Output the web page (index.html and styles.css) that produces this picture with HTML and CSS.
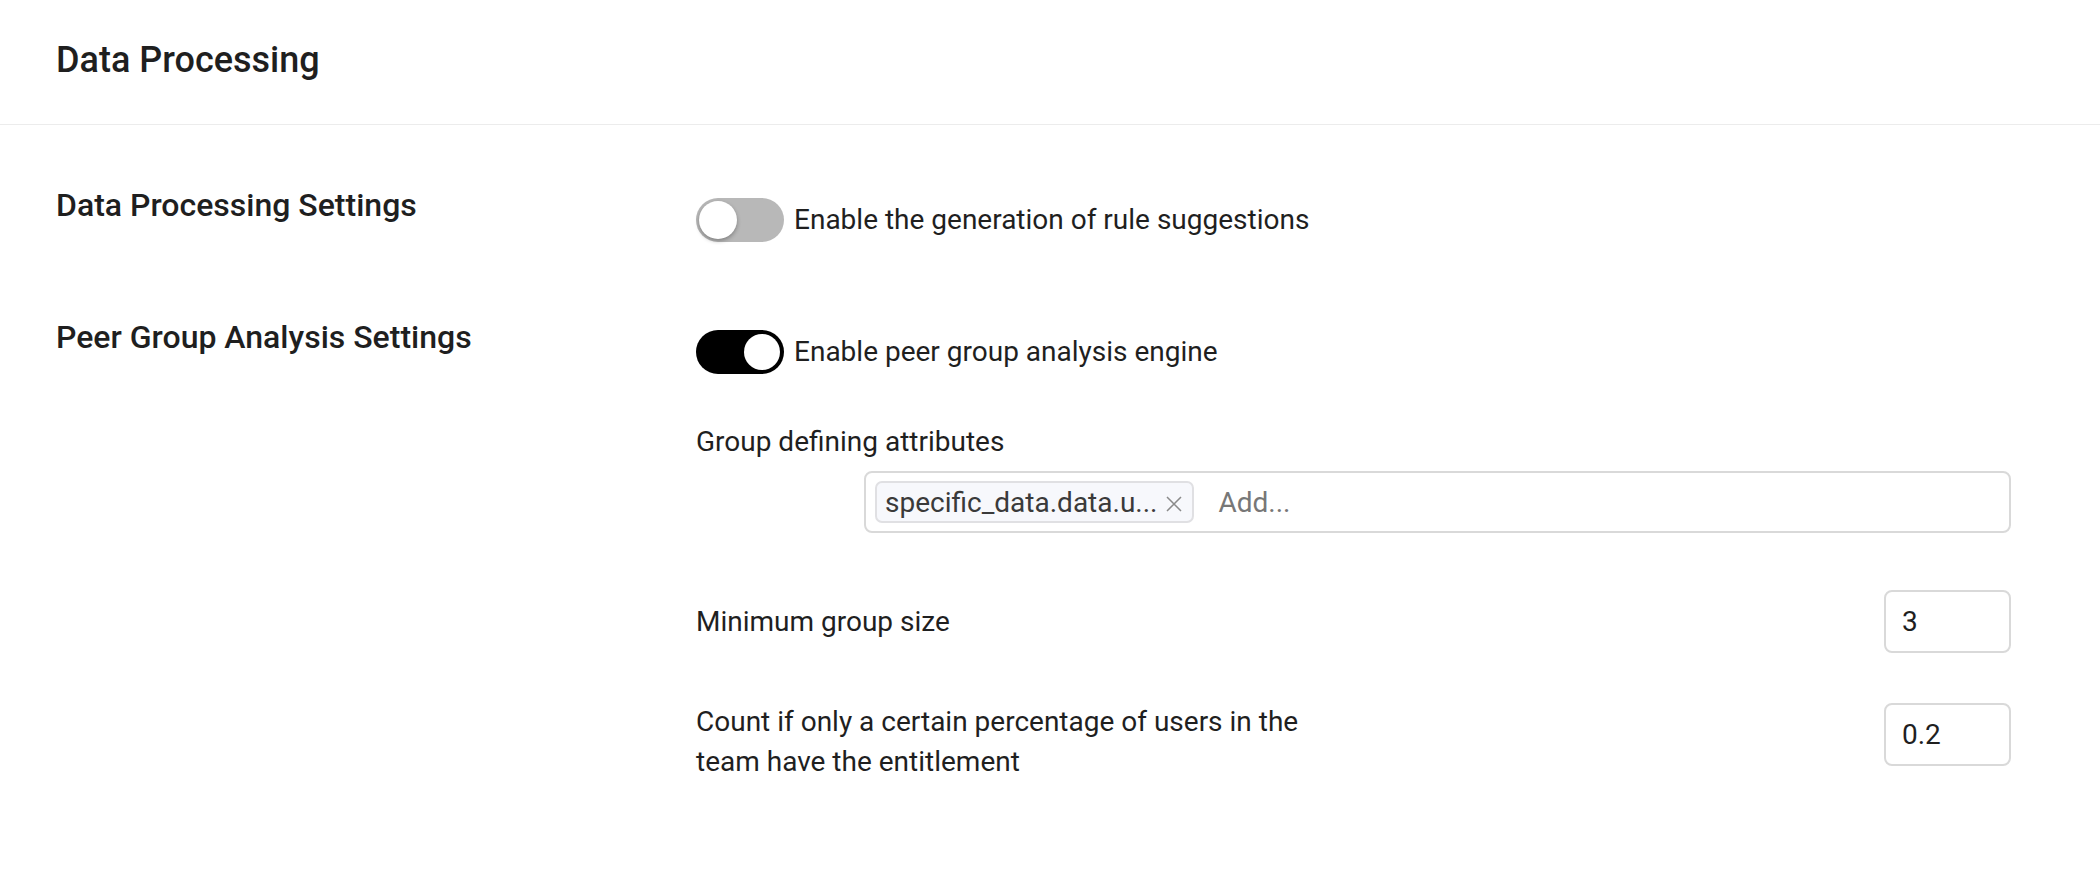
FILE: index.html
```html
<!DOCTYPE html>
<html lang="en">
<head>
<meta charset="utf-8">
<title>Data Processing</title>
<link rel="stylesheet" href="styles.css">
</head>
<body>
<div class="page">
  <header class="header">
    <h1 class="title">Data Processing</h1>
  </header>
  <main class="content">
    <section class="section">
      <h2 class="section-title">Data Processing Settings</h2>
      <div class="section-body">
        <label class="switch-row">
          <span class="switch"><span class="knob"></span></span>
          <span class="switch-label">Enable the generation of rule suggestions</span>
        </label>
      </div>
    </section>
    <section class="section">
      <h2 class="section-title">Peer Group Analysis Settings</h2>
      <div class="section-body">
        <label class="switch-row">
          <span class="switch switch-on"><span class="knob"></span></span>
          <span class="switch-label">Enable peer group analysis engine</span>
        </label>
        <div class="field-label">Group defining attributes</div>
        <div class="tag-input">
          <span class="tag"><span class="tag-text">specific_data.data.u...</span><svg class="tag-close" width="18" height="18" viewBox="0 0 18 18"><path d="M2 2 L16 16 M16 2 L2 16" stroke="#8a8a8a" stroke-width="1.5" fill="none"/></svg></span>
          <span class="placeholder">Add...</span>
        </div>
        <div class="row row-center">
          <div class="row-label">Minimum group size</div>
          <div class="num-input">3</div>
        </div>
        <div class="row row-top">
          <div class="row-label row-label-wrap">Count if only a certain percentage of users in the team have the entitlement</div>
          <div class="num-input">0.2</div>
        </div>
      </div>
    </section>
  </main>
</div>
</body>
</html>
```

FILE: styles.css
```css
* { box-sizing: border-box; }
html, body { margin: 0; padding: 0; background: #fff; }
body {
  font-family: Roboto, "Noto Sans", Arial, sans-serif;
  color: #1f1f1f;
  width: 2100px;
  height: 874px;
  overflow: hidden;
}
.header {
  height: 125px;
  padding-left: 56px;
  display: flex;
  align-items: center;
  border-bottom: 1px solid #ececec;
}
.title {
  margin: 0;
  font-size: 36px;
  font-weight: 500;
  line-height: 44px;
  padding-bottom: 4px;
}
.content {
  padding: 62px 89px 0 56px;
  display: flex;
  flex-direction: column;
  gap: 77px;
}
.section {
  display: grid;
  grid-template-columns: 640px 1fr;
}
.section-title {
  margin: 0;
  font-size: 32px;
  font-weight: 500;
  line-height: 36px;
}
.section-body {
  padding-top: 11px;
  display: flex;
  flex-direction: column;
}
.switch-row {
  display: flex;
  align-items: center;
  gap: 10px;
}
.switch {
  width: 88px;
  height: 44px;
  border-radius: 22px;
  background: #b8b8b8;
  position: relative;
  flex: none;
}
.knob {
  position: absolute;
  top: 3px;
  left: 3px;
  width: 38px;
  height: 38px;
  border-radius: 50%;
  background: #fff;
  box-shadow: 0 2px 4px rgba(0,0,0,0.3);
}
.switch-on { background: #000; }
.switch-on .knob { left: auto; right: 4px; width: 36px; height: 36px; top: 4px; box-shadow: none; }
.switch-label, .field-label, .row-label {
  font-size: 28px;
  line-height: 40px;
}
.field-label { margin-top: 48px; }
.tag-input {
  margin-top: 9px;
  margin-left: 168px;
  height: 62px;
  border: 2px solid #d9d9d9;
  border-radius: 8px;
  display: flex;
  align-items: center;
  padding: 0 9px;
  gap: 24px;
}
.tag {
  height: 42px;
  border: 2px solid #e0e0e3;
  border-radius: 7px;
  background: #f7f8fc;
  display: flex;
  align-items: center;
  padding: 0 9px 0 8px;
  gap: 8px;
  font-size: 28px;
  color: #3a3a3a;
}
.tag-close { flex: none; margin-top: 3px; }
.placeholder { font-size: 28px; color: #777; }
.row {
  display: flex;
  justify-content: space-between;
}
.row-center { align-items: center; margin-top: 57px; }
.row-top { align-items: flex-start; margin-top: 50px; }
.row-label-wrap { max-width: 620px; margin-top: -1px; }
.num-input {
  width: 127px;
  height: 63px;
  border: 2px solid #d9d9d9;
  border-radius: 8px;
  padding: 0 16px;
  display: flex;
  align-items: center;
  font-size: 28px;
  color: #1f1f1f;
}
```
